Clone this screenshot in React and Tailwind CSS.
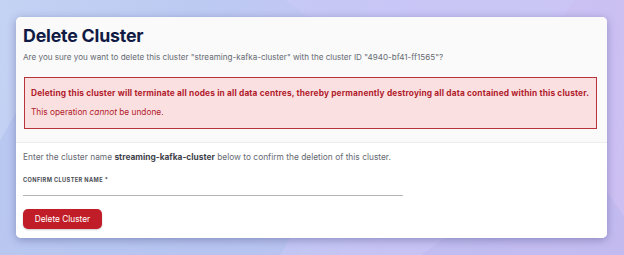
export default function App() {
  return (
    <div className="relative w-[624px] h-[255px] overflow-hidden bg-[linear-gradient(100deg,#c4d2f4_0%,#bccaf2_30%,#c6c4f4_60%,#cdbff2_100%)]" style={{ fontFamily: 'Inter, sans-serif' }}>
      <div className="absolute -left-[40px] top-[120px] w-[300px] h-[260px] rotate-[30deg] bg-[#b3c2ee] opacity-60" />
      <div className="absolute left-[300px] -top-[120px] w-[260px] h-[200px] rotate-[35deg] bg-[#c9c8f6] opacity-60" />
      <div className="absolute left-[360px] top-[215px] w-[300px] h-[200px] -rotate-[35deg] bg-[#bdb9ee] opacity-60" />
      <div className="relative pt-[17px] pl-[16px]">
        <div className="w-[591px] h-[221px] rounded-[5px] bg-white shadow-[0_2px_8px_rgba(40,40,100,0.35)] overflow-hidden flex flex-col">
          <div className="bg-[#fafafa] h-[126px] px-[7px] pt-[6px] border-b border-[#ececec]">
            <h1 className="text-[17.8px] leading-[26px] font-bold text-[#111a44] tracking-[-0.2px]">Delete Cluster</h1>
            <p className="mt-[2px] text-[8.1px] leading-[12px] text-[#666a72]">Are you sure you want to delete this cluster "streaming-kafka-cluster" with the cluster ID "4940-bf41-ff1565"?</p>
            <div className="mt-[14px] ml-[1px] mr-[3px] h-[52px] border border-[#b8333b] bg-[#fbe0e1] px-[6px] pt-[9px]">
              <p className="text-[8.3px] leading-[12px] font-bold tracking-[0.17px] text-[#b0212c] whitespace-nowrap">Deleting this cluster will terminate all nodes in all data centres, thereby permanently destroying all data contained within this cluster.</p>
              <p className="mt-[7px] text-[8.3px] leading-[12px] text-[#b0212c]">This operation <em className="italic">cannot</em> be undone.</p>
            </div>
          </div>
          <div className="flex-1 bg-white px-[7px] pt-[8px]">
            <p className="text-[8.4px] leading-[12px] text-[#666a72]">Enter the cluster name <span className="font-bold text-[#3f434c]">streaming-kafka-cluster</span> below to confirm the deletion of this cluster.</p>
            <div className="mt-[10px] w-[380px] h-[23px] border-b border-[#b5b5b5] pt-[3px]">
              <p className="text-[5.6px] leading-[8px] font-bold tracking-[0.4px] text-[#4a4d55]">CONFIRM CLUSTER NAME *</p>
            </div>
            <button className="mt-[13px] w-[79px] h-[20px] rounded-[5px] bg-[#c11d28] text-white text-[8.3px] leading-[20px] shadow-[0_1px_2px_rgba(0,0,0,0.2)]">Delete Cluster</button>
          </div>
        </div>
      </div>
    </div>
  );
}
